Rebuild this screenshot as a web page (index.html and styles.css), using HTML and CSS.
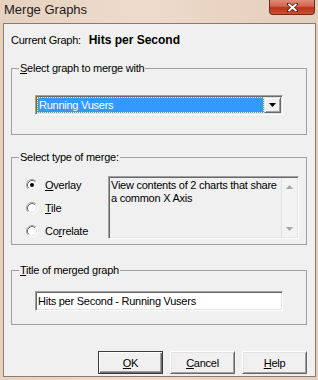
FILE: index.html
```html
<!DOCTYPE html>
<html lang="en">
<head>
  <meta charset="UTF-8" />
  <title>Merge Graphs</title>
  <link rel="stylesheet" href="styles.css">
</head>
<body>
  <div class="window">
    <div class="titlebar">
      <span class="title">Merge Graphs</span>
      <span class="close-btn">
        <svg width="11" height="9" viewBox="0 0 11 9">
          <path d="M1.5 1l8 7M9.5 1l-8 7" stroke="#5a1a10" stroke-width="3.4" stroke-linecap="round"/>
          <path d="M1.5 1l8 7M9.5 1l-8 7" stroke="#fff" stroke-width="1.8"/>
        </svg>
      </span>
    </div>

    <div class="client">
      <div class="current">Current Graph: <b>Hits per Second</b></div>

      <fieldset class="group group-graph">
        <legend><u>S</u>elect graph to merge with</legend>
        <div class="combo">
          <div class="combo-value"><span class="combo-sel">Running Vusers</span></div>
          <div class="combo-btn">
            <svg width="7" height="4" viewBox="0 0 7 4"><path d="M0 0h7L3.5 4z" fill="#000"/></svg>
          </div>
        </div>
      </fieldset>

      <fieldset class="group group-type">
        <legend>Select type of merge:</legend>
        <div class="type-row">
          <div class="radios">
            <div class="radio">
              <svg class="radio-dot" width="12" height="12" viewBox="0 0 12 12">
                <circle cx="6" cy="6" r="5" fill="#fff"/>
                <path d="M2.11 9.89A5.5 5.5 0 0 1 9.89 2.11" fill="none" stroke="#a0a0a0"/>
                <path d="M2.82 9.18A4.5 4.5 0 0 1 9.18 2.82" fill="none" stroke="#696969"/>
                <path d="M2.11 9.89A5.5 5.5 0 0 0 9.89 2.11" fill="none" stroke="#fff"/>
                <path d="M2.82 9.18A4.5 4.5 0 0 0 9.18 2.82" fill="none" stroke="#e3e3e3"/>
                <circle cx="6" cy="6" r="2" fill="#000"/>
              </svg>
              <span><u>O</u>verlay</span>
            </div>
            <div class="radio">
              <svg class="radio-dot" width="12" height="12" viewBox="0 0 12 12">
                <circle cx="6" cy="6" r="5" fill="#fff"/>
                <path d="M2.11 9.89A5.5 5.5 0 0 1 9.89 2.11" fill="none" stroke="#a0a0a0"/>
                <path d="M2.82 9.18A4.5 4.5 0 0 1 9.18 2.82" fill="none" stroke="#696969"/>
                <path d="M2.11 9.89A5.5 5.5 0 0 0 9.89 2.11" fill="none" stroke="#fff"/>
                <path d="M2.82 9.18A4.5 4.5 0 0 0 9.18 2.82" fill="none" stroke="#e3e3e3"/>
              </svg>
              <span><u>T</u>ile</span>
            </div>
            <div class="radio">
              <svg class="radio-dot" width="12" height="12" viewBox="0 0 12 12">
                <circle cx="6" cy="6" r="5" fill="#fff"/>
                <path d="M2.11 9.89A5.5 5.5 0 0 1 9.89 2.11" fill="none" stroke="#a0a0a0"/>
                <path d="M2.82 9.18A4.5 4.5 0 0 1 9.18 2.82" fill="none" stroke="#696969"/>
                <path d="M2.11 9.89A5.5 5.5 0 0 0 9.89 2.11" fill="none" stroke="#fff"/>
                <path d="M2.82 9.18A4.5 4.5 0 0 0 9.18 2.82" fill="none" stroke="#e3e3e3"/>
              </svg>
              <span>Co<u>r</u>relate</span>
            </div>
          </div>
          <div class="memo">
            <div class="memo-text">View contents of 2 charts that share a common X Axis</div>
            <div class="scrollbar">
              <div class="sb-btn">
                <svg width="7" height="4" viewBox="0 0 7 4"><path d="M0 4h7L3.5 0z" fill="#a6a6a6"/></svg>
              </div>
              <div class="sb-track"></div>
              <div class="sb-btn">
                <svg width="7" height="4" viewBox="0 0 7 4"><path d="M0 0h7L3.5 4z" fill="#a6a6a6"/></svg>
              </div>
            </div>
          </div>
        </div>
      </fieldset>

      <fieldset class="group group-title">
        <legend><u>T</u>itle of merged graph</legend>
        <div class="textbox">Hits per Second - Running Vusers</div>
      </fieldset>

      <div class="buttons">
        <button class="btn btn-default"><u>O</u>K</button>
        <button class="btn"><u>C</u>ancel</button>
        <button class="btn"><u>H</u>elp</button>
      </div>
    </div>
  </div>
</body>
</html>
```

FILE: styles.css
```css
body {
  margin: 0;
  font-family: 'Liberation Sans', Arial, sans-serif;
  font-size: 11px;
  letter-spacing: -0.25px;
  color: #000;
  background: #e7d3c2;
}

.window {
  width: 318px;
  height: 380px;
  display: flex;
  flex-direction: column;
  background: linear-gradient(90deg, #e6d1bf 0%, #eedbcc 45%, #e9d4c3 70%, #e4cfbd 100%);
}

.titlebar {
  height: 23px;
  flex-shrink: 0;
  display: flex;
  justify-content: space-between;
  align-items: flex-start;
}

.title {
  font-size: 13px;
  letter-spacing: 0;
  line-height: 16px;
  padding: 2px 0 0 4px;
  color: #1e1a17;
}

.close-btn {
  width: 46px;
  height: 15px;
  margin-right: 3px;
  box-sizing: border-box;
  border: 1px solid #6e2c20;
  border-top: none;
  border-radius: 0 0 4px 4px;
  background: linear-gradient(180deg, #de8c79 0%, #d0644d 45%, #bb321b 55%, #d0512f 100%);
  display: flex;
  align-items: center;
  justify-content: center;
}

.client {
  flex: 1;
  margin: 0 2px 3px 3px;
  border: 1px solid #8a7b6e;
  background: #f0f0f0;
  padding: 10px 8px 0 7px;
}

.current {
  line-height: 13px;
}

.current b {
  font-size: 12px;
  letter-spacing: 0;
  margin-left: 5px;
}

.group {
  margin: 0;
  padding: 0;
  border: 1px solid #a0a0a0;
  min-width: 0;
}

.group legend {
  padding: 0 1px;
  margin-left: 7px;
  line-height: 13px;
}

.group-graph {
  margin-top: 15px;
}

.group-type {
  margin-top: 16px;
}

.group-title {
  margin-top: 19px;
}

.combo {
  display: flex;
  height: 20px;
  margin: 20px 23px 19px 23px;
  box-sizing: border-box;
  border: 1px solid;
  border-color: #a0a0a0 #fff #fff #a0a0a0;
  box-shadow: inset 1px 1px #696969, inset -1px -1px #e3e3e3;
  padding: 1px;
  background: #fff;
}

.combo-value {
  flex: 1;
  display: flex;
}

.combo-sel {
  flex: 1;
  background: #3399ff;
  color: #fff;
  line-height: 16px;
  padding-left: 2px;
  outline: 1px dotted #fdf3a8;
  outline-offset: -1px;
}

.combo-btn {
  width: 17px;
  box-sizing: border-box;
  border: 1px solid;
  border-color: #e3e3e3 #696969 #696969 #e3e3e3;
  box-shadow: inset 1px 1px #fff, inset -1px -1px #a0a0a0;
  background: #f0f0f0;
  display: flex;
  align-items: center;
  justify-content: center;
}

.type-row {
  display: flex;
  align-items: flex-start;
  margin-top: 9px;
  padding-bottom: 2px;
}

.radios {
  width: 82px;
  margin-left: 14px;
  display: flex;
  flex-direction: column;
}

.radio {
  height: 23px;
  display: flex;
  align-items: center;
  gap: 7px;
}

.memo {
  width: 191px;
  height: 63px;
  margin-top: 3px;
  box-sizing: border-box;
  border: 1px solid;
  border-color: #a0a0a0 #fff #fff #a0a0a0;
  box-shadow: inset 1px 1px #696969, inset -1px -1px #e3e3e3;
  padding: 1px;
  background: #f0f0f0;
  display: flex;
}

.memo-text {
  flex: 1;
  padding: 1px 0 0 1px;
  line-height: 13px;
}

.scrollbar {
  width: 16px;
  display: flex;
  flex-direction: column;
  background: #f3f3f3;
  border-left: 1px solid #e2e2e2;
  box-sizing: border-box;
}

.sb-btn {
  height: 17px;
  display: flex;
  align-items: center;
  justify-content: center;
}

.sb-track {
  flex: 1;
}

.textbox {
  height: 20px;
  margin: 14px 23px 13px 23px;
  box-sizing: border-box;
  border: 1px solid;
  border-color: #a0a0a0 #fff #fff #a0a0a0;
  box-shadow: inset 1px 1px #696969, inset -1px -1px #e3e3e3;
  background: #fff;
  padding: 0 2px;
  line-height: 18px;
}

.buttons {
  display: flex;
  justify-content: flex-end;
  gap: 7px;
  margin-top: 26px;
}

.btn {
  width: 65px;
  height: 23px;
  margin: 0;
  padding: 0;
  font-family: inherit;
  font-size: 11px;
  letter-spacing: -0.25px;
  color: #000;
  background: #f0f0f0;
  border: 1px solid;
  border-color: #fff #696969 #696969 #fff;
  box-shadow: inset 1px 1px #e3e3e3, inset -1px -1px #a0a0a0;
}

.btn-default {
  border-color: #3c3c3c;
  box-shadow: inset 1px 1px #fff, inset -1px -1px #696969, inset -2px -2px #a0a0a0;
}
```
